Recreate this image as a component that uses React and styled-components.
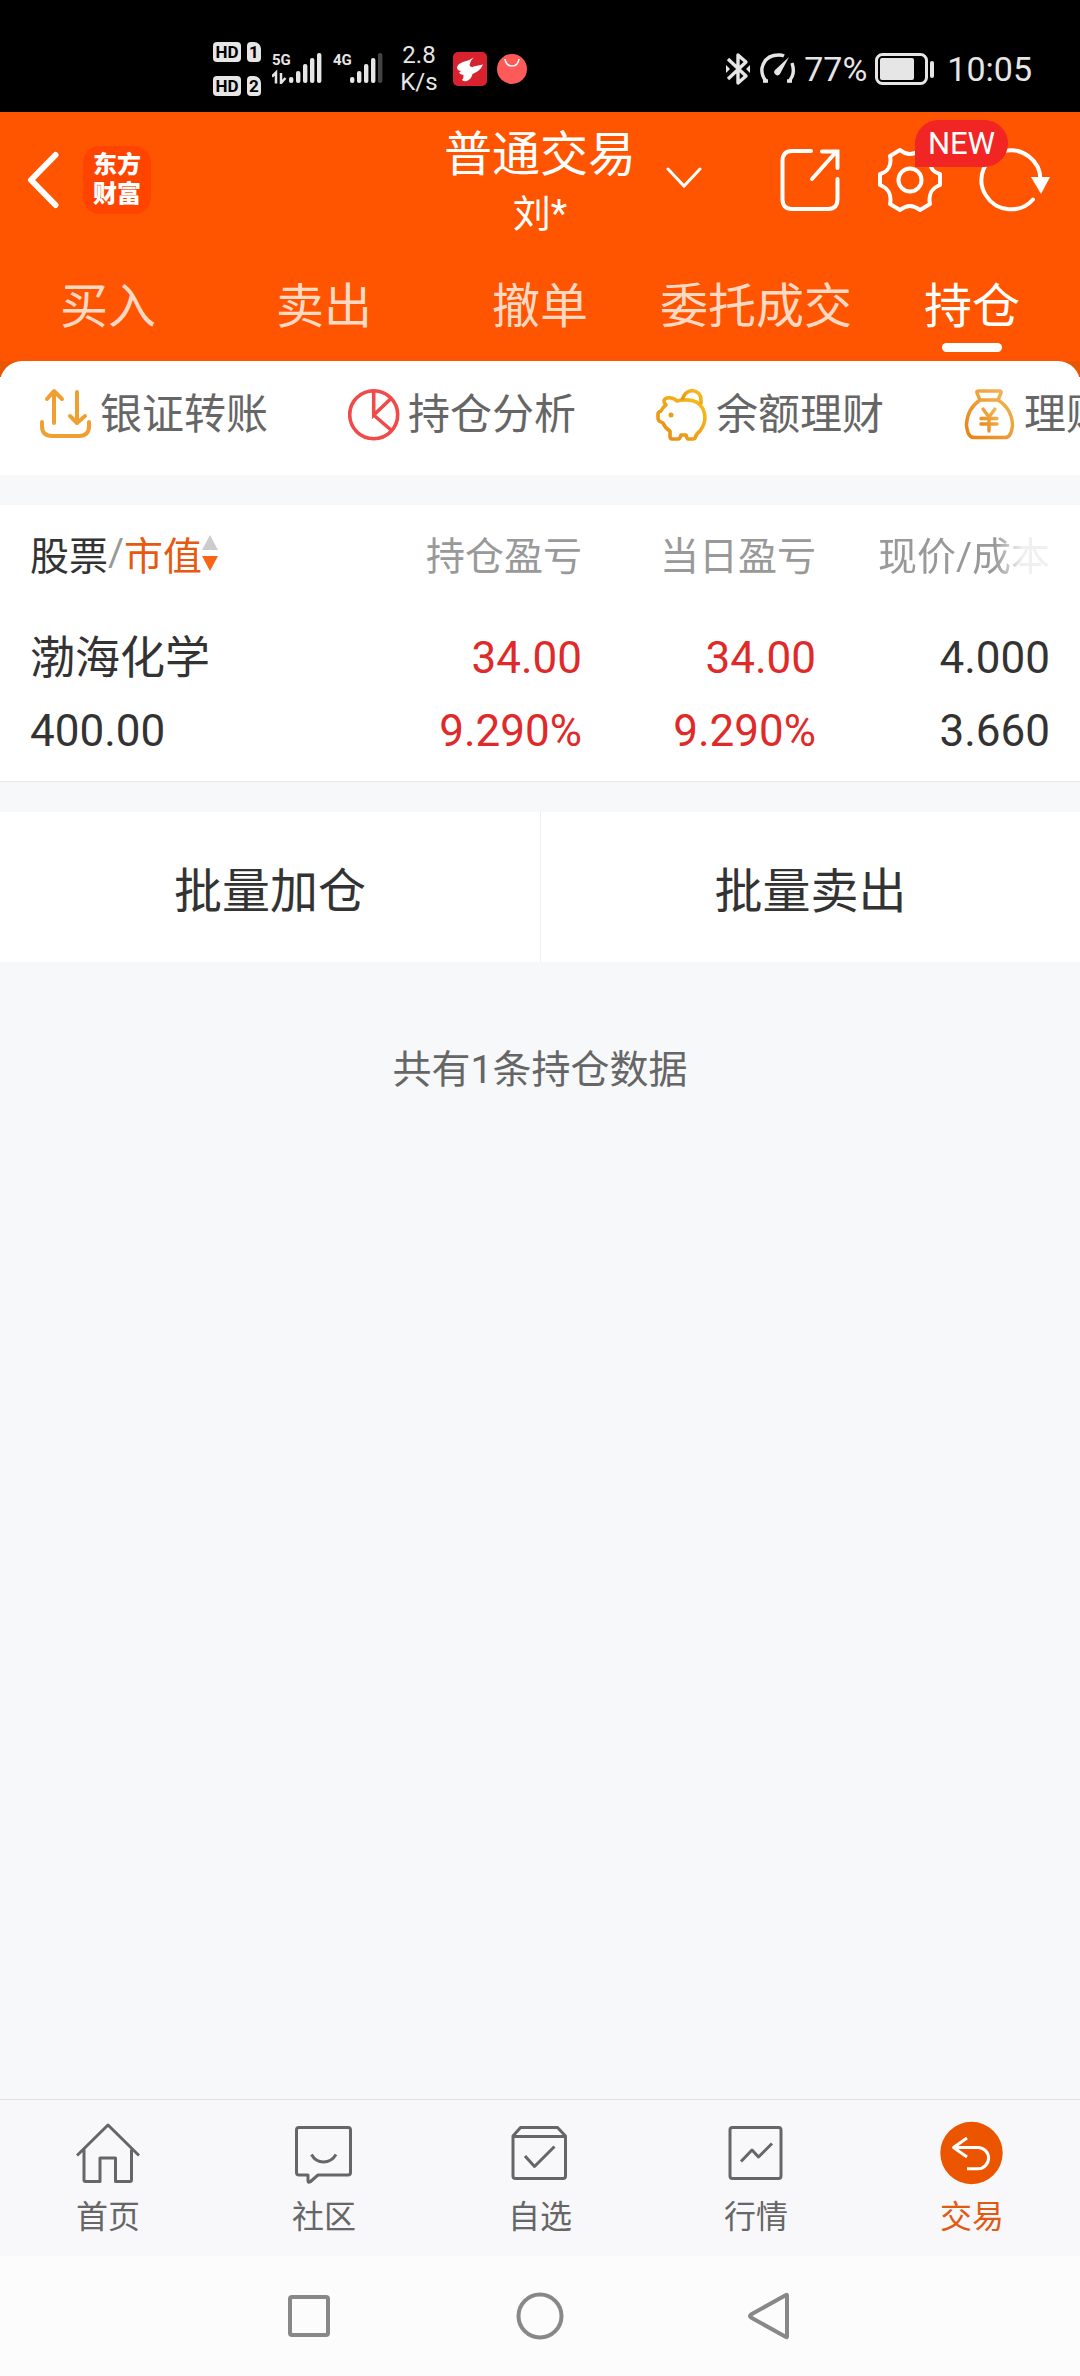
import React, {useState} from 'react';
import styled, {createGlobalStyle} from "styled-components";

const tradeTabs = ['买入', '卖出', '撤单', '委托成交', '持仓'];

const holdings = [
  {
    id: 1,
    name: '渤海化学',
    value: '400.00',
    profit: '34.00',
    profitRate: '9.290%',
    dayProfit: '34.00',
    dayRate: '9.290%',
    price: '4.000',
    cost: '3.660'
  }
];

const TransferIcon = () => (
  <svg width="52" height="56" viewBox="0 0 52 56" fill="none" stroke="#f0a030" strokeWidth="4" strokeLinecap="round" strokeLinejoin="round">
    <path d="M2 34v4q0 10 10 10h27q10 0 10-10v-4M14 35V4M7 11l7-8 8 8M37 4v31M30 28l7 7 8-7" />
  </svg>
);

const PieIcon = () => (
  <svg width="52" height="56" viewBox="0 0 52 56" fill="none" stroke="#f04a4a" strokeWidth="3.6">
    <circle cx="25.7" cy="26.7" r="24" />
    <path d="M25.7 3v24L43 10.5M25.7 27L43 42" />
  </svg>
);

const PiggyIcon = () => (
  <svg width="52" height="56" viewBox="0 0 52 56" fill="none" stroke="url(#piggy)" strokeWidth="3.6" strokeLinejoin="round">
    <defs>
      <linearGradient id="piggy" x1="1" y1="0" x2="0" y2="1">
        <stop offset="0" stopColor="#f7c01c" />
        <stop offset="1" stopColor="#e88a16" />
      </linearGradient>
    </defs>
    <path d="M8 13q0-2 3-3 6-1 10 3 3-1 7-1 14-1 19 9 5 11-3 22-4 3-5 7 0 1-2 1h-5q-1 0-2-4h-5q-1 4-3 4h-6q-2 0-2-3v-5q-5-3-7-8l-4-2q-1-1-1-3v-4q0-2 3-3 2-4 5-6-2-2-2-4z" />
    <path d="M26 12q3-9 10-9.5 9 1 9 9.5v4" />
    <circle cx="15" cy="27" r="2.5" fill="#ee9c18" stroke="none" />
  </svg>
);

const MoneyBagIcon = () => (
  <svg width="52" height="56" viewBox="0 0 52 56" fill="none" stroke="url(#bag)" strokeWidth="3.4" strokeLinecap="round" strokeLinejoin="round">
    <defs>
      <linearGradient id="bag" x1="1" y1="0" x2="0" y2="1">
        <stop offset="0" stopColor="#f3b85a" />
        <stop offset="1" stopColor="#ea8210" />
      </linearGradient>
    </defs>
    <path d="M16 12L13 5q-1-2 2-2h20q3 0 2 2l-3 7M16 12h18q14 9 14.5 25-1 12-7 12.5h-32q-6-.5-7-12.5Q3 21 16 12z" />
    <path d="M19 21l6 8 6-8M25 29v14M17 30.5h16M17 36h16" />
  </svg>
);

const quickLinks = [
  {label: '银证转账', Icon: TransferIcon},
  {label: '持仓分析', Icon: PieIcon},
  {label: '余额理财', Icon: PiggyIcon},
  {label: '理财产品', Icon: MoneyBagIcon}
];

const HomeIcon = () => (
  <path d="M1 34.5L32 4l31 30.5M8 28.5V59q0 1.5 1.5 1.5H24V37h15.5v23.5H54q1.5 0 1.5-1.5V28.5" />
);

const ChatIcon = () => (
  <>
    <path d="M7 6.5h49q2.5 0 2.5 2.5v42.5q0 2.5-2.5 2.5H26l-8 7q-2 1-2-1v-6H7q-2.5 0-2.5-2.5V9q0-2.5 2.5-2.5z" />
    <path d="M19.5 33.5q4 7.5 12 7.5t12.5-7.5" />
  </>
);

const PickIcon = () => (
  <>
    <path d="M12.5 6.5h37l8 8.5v40q0 2.5-2.5 2.5H7.5Q5 57.5 5 55V15zM5 15.5h52.5" />
    <path d="M17 35l9.5 10.5 20-20" />
  </>
);

const ChartIcon = () => (
  <>
    <rect x="6" y="6.5" width="51" height="51" rx="2.5" />
    <path d="M17 40.5l11-11.5 6.5 7L48 22.5" />
  </>
);

const TradeIcon = () => (
  <>
    <circle cx="31.5" cy="32" r="31.2" fill="#eb5500" stroke="none" />
    <path d="M27 17L13.5 26.5 27 36M13.5 26.5H38a10.6 10.6 0 010 21.2H27" stroke="#fff" />
  </>
);

const mainTabs = [
  {label: '首页', Icon: HomeIcon},
  {label: '社区', Icon: ChatIcon},
  {label: '自选', Icon: PickIcon},
  {label: '行情', Icon: ChartIcon},
  {label: '交易', Icon: TradeIcon}
];

const barTops = [24, 18, 11, 5, 0];

const Signal = ({type, weak, arrows}) => (
  <SignalWrapper>
    <span>{type}</span>
    <svg width="50" height="31" viewBox="0 0 50 31">
      {barTops.map((top, i) => (
        <rect key={top} x={17 + i * 7} y={top} width="4.4" height={30 - top} rx="2" fill={weak && i === 4 ? '#444' : '#e6e6e6'} />
      ))}
      {arrows && <path d="M0 23.5l4-4v11M9 20v10l4.5-5" fill="none" stroke="#e6e6e6" strokeWidth="2.5" />}
    </svg>
  </SignalWrapper>
);

const StatusBar = () => (
  <StatusWrapper>
    <StatusGroup>
      <SimList>
        <SimRow><b>HD</b><i>1</i></SimRow>
        <SimRow><b>HD</b><i>2</i></SimRow>
      </SimList>
      <Signal type="5G" arrows />
      <Signal type="4G" weak />
      <Speed>2.8<br />K/s</Speed>
      <svg width="74" height="34" viewBox="0 0 74 34">
        <rect width="34" height="34" rx="5" fill="#d8222f" />
        <path d="M4 16q0-4 6-6 6-1 10.500-4.500Q17 9 16.500 13q1 3 4 1.500L30 12.500q-3 7-10.500 9.500-1 5-5.500 7-3 1-5-1 2-2 1.500-5-5-1-4-3l2-1q-4 0-4.500-3z" fill="#fff" />
        <circle cx="59" cy="17" r="15" fill="#ff5a5a" />
        <path d="M52 7q1 7 7 7t7-7" fill="none" stroke="#fff" strokeWidth="1.6" />
      </svg>
    </StatusGroup>
    <StatusGroup>
      <svg width="70" height="34" viewBox="0 0 70 34" fill="none" stroke="#e6e6e6" strokeWidth="3.4">
        <path d="M2 7l18 17-8 7V3l8 7L2 27" strokeLinejoin="round" />
        <path d="M0 13l4 4-4 4zM24 13l-4 4 4 4z" fill="#e6e6e6" stroke="none" />
        <path d="M41 30q-6-6-5-14 3-13 17-13 3 0 5 1M66 11q4 12-4 19M37 29h5M61 29h5" />
        <path d="M63 5L54 22a3 3 0 11-5-4z" fill="#e6e6e6" stroke="none" />
      </svg>
      <span>77%</span>
      <svg width="60" height="34" viewBox="0 0 60 34">
        <rect x="1.5" y="2.5" width="50" height="29" rx="6" fill="none" stroke="#e6e6e6" strokeWidth="3" />
        <rect x="5" y="6" width="34" height="22" rx="2" fill="#e6e6e6" />
        <rect x="55" y="9" width="4" height="17" rx="2" fill="#e6e6e6" />
      </svg>
      <Clock>10:05</Clock>
    </StatusGroup>
  </StatusWrapper>
);

const Header = ({activeTab, onChange}) => (
  <HeaderWrapper>
    <Toolbar>
      <ToolbarLeft>
        <PlainButton type="button" aria-label="返回">
          <svg width="36" height="64" viewBox="0 0 36 64" fill="none" stroke="#fff" strokeWidth="6" strokeLinecap="round" strokeLinejoin="round">
            <path d="M28.5 7L4 32l24.5 25" />
          </svg>
        </PlainButton>
        <Logo>东方<br />财富</Logo>
      </ToolbarLeft>
      <Account>
        <h1>普通交易</h1>
        <p>刘*</p>
      </Account>
      <ToolbarRight>
        <PlainButton type="button" aria-label="切换账户">
          <svg width="36" height="28" viewBox="0 0 36 28" fill="none" stroke="#fff" strokeWidth="3" strokeLinecap="round">
            <path d="M2 3l16 17L34 3" />
          </svg>
        </PlainButton>
        <Tools>
          <PlainButton type="button" aria-label="分享">
            <svg width="64" height="64" viewBox="0 0 64 64" fill="none" stroke="#fff" strokeWidth="4" strokeLinecap="round">
              <path d="M34 3H15Q5.5 3 5.5 13v38Q5.5 61 15 61h36q9.500 0 9.500-10V31M35 31L59 4M45 3.5h15.500V20" />
            </svg>
          </PlainButton>
          <PlainButton type="button" aria-label="设置">
            <svg width="64" height="64" viewBox="0 0 64 64" fill="none" stroke="#fff" strokeWidth="4" strokeLinejoin="round">
              <path d="M22 2Q32 10 42 2l10 6c-2 9 2 16 10 18v11c-8 3-12 10-10 19l-10 6Q32 54 22 62l-10-6c2-9-2-16-10-19V26C10 24 14 17 12 8z" />
              <circle cx="32" cy="32" r="11.5" />
            </svg>
            <Badge>NEW</Badge>
          </PlainButton>
          <PlainButton type="button" aria-label="刷新">
            <svg width="72" height="64" viewBox="0 0 72 64" fill="none" stroke="#fff" strokeWidth="4" strokeLinecap="round">
              <path d="M61.500 32A29.500 29.500 0 1054 51.500" />
              <path d="M52 29h19l-9 17z" fill="#fff" stroke="none" />
            </svg>
          </PlainButton>
        </Tools>
      </ToolbarRight>
    </Toolbar>
    <TabList>
      {tradeTabs.map((tab) => (
        <TradeTab type="button" key={tab} $active={tab === activeTab} onClick={() => onChange(tab)}>{tab}</TradeTab>
      ))}
    </TabList>
  </HeaderWrapper>
);

const HoldingTable = () => (
  <Table>
    <colgroup>
      <col />
      <col className="num" />
      <col className="num" />
      <col className="last" />
    </colgroup>
    <thead>
      <tr>
        <th>
          <SortHead>
            <b>股票</b>/<em>市值</em>
            <svg width="16" height="36" viewBox="0 0 16 36">
              <path d="M8 0l8 15H0z" fill="#ccc" />
              <path d="M0 21h16L8 36z" fill="#f96514" />
            </svg>
          </SortHead>
        </th>
        <th>持仓盈亏</th>
        <th>当日盈亏</th>
        <th><Fade>现价/成本</Fade></th>
      </tr>
    </thead>
    <tbody>
      {holdings.map((item) => (
        <tr key={item.id}>
          <td><StockName>{item.name}</StockName>{item.value}</td>
          <Rise>{item.profit}<br />{item.profitRate}</Rise>
          <Rise>{item.dayProfit}<br />{item.dayRate}</Rise>
          <td>{item.price}<br />{item.cost}</td>
        </tr>
      ))}
    </tbody>
  </Table>
);

const App = () => {
  const [activeTab, setActiveTab] = useState('持仓');

  return (
    <Page>
      <GlobalStyle />
      <StatusBar />
      <Header activeTab={activeTab} onChange={setActiveTab} />
      <Main>
        <QuickWrapper>
          <QuickList>
            {quickLinks.map(({label, Icon}) => (
              <a href="#" key={label}><Icon /><span>{label}</span></a>
            ))}
          </QuickList>
        </QuickWrapper>
        <HoldingTable />
        <BatchRow>
          <button type="button">批量加仓</button>
          <button type="button">批量卖出</button>
        </BatchRow>
        <Summary>共有{holdings.length}条持仓数据</Summary>
      </Main>
      <MainNav>
        {mainTabs.map(({label, Icon}) => (
          <NavLink href="#" key={label} $active={label === '交易'}>
            <svg width="64" height="64" viewBox="0 0 64 64" fill="none" stroke="#666" strokeWidth="3" strokeLinejoin="round">
              <Icon />
            </svg>
            {label}
          </NavLink>
        ))}
      </MainNav>
      <SystemNav>
        <PlainButton type="button" aria-label="最近任务">
          <svg width="48" height="48" viewBox="0 0 48 48" fill="none" stroke="#888" strokeWidth="4">
            <rect x="4" y="5" width="38" height="38" rx="2" />
          </svg>
        </PlainButton>
        <PlainButton type="button" aria-label="主屏幕">
          <svg width="48" height="48" viewBox="0 0 48 48" fill="none" stroke="#888" strokeWidth="4">
            <circle cx="24" cy="24" r="21.5" />
          </svg>
        </PlainButton>
        <PlainButton type="button" aria-label="后退">
          <svg width="48" height="48" viewBox="0 0 48 48" fill="none" stroke="#888" strokeWidth="4" strokeLinejoin="round">
            <path d="M41 3.5v41q0 1-1 .5L5 25.5q-2-1.500 0-3L40 3q1-.5 1 .5z" />
          </svg>
        </PlainButton>
      </SystemNav>
    </Page>
  )
}

const GlobalStyle = createGlobalStyle`
  *{
    box-sizing: border-box;
  }

  body{
    margin: 0;
    background-color: #f7f8fa;
    font-family: Roboto, "Noto Sans CJK SC", sans-serif;
    color: #333;
  }

  button{
    font-family: inherit;
    border: 0;
    padding: 0;
    background: none;
    color: inherit;
    cursor: pointer;
  }

  a{
    color: inherit;
    text-decoration: none;
  }

  svg{
    display: block;
    flex: none;
  }
`;

const Page = styled.div`
  min-height: 100vh;
  display: flex;
  flex-direction: column;
`;

const StatusWrapper = styled.div`
  height: 112px;
  padding: 25px 48px 0 213px;
  display: flex;
  justify-content: space-between;
  align-items: center;
  background-color: #000;
  color: #e6e6e6;
  font-size: 34px;
`;

const StatusGroup = styled.div`
  display: flex;
  align-items: center;
  gap: 8px;
`;

const SimList = styled.div`
  display: grid;
  gap: 14px;
`;

const SimRow = styled.div`
  display: flex;
  gap: 6px;
  font-size: 17px;
  line-height: 20px;
  color: #000;

  b, i{
    background-color: #e6e6e6;
    border-radius: 4px;
    text-align: center;
    font-style: normal;
    font-weight: 700;
  }

  b{
    width: 28px;
  }

  i{
    width: 14px;
    border-top-right-radius: 7px;
  }
`;

const SignalWrapper = styled.div`
  position: relative;
  margin-left: 3px;

  span{
    position: absolute;
    left: 0;
    top: 0;
    font-size: 15px;
    line-height: 14px;
    font-weight: 700;
  }
`;

const Speed = styled.div`
  width: 52px;
  margin-left: 2px;
  font-size: 24px;
  line-height: 27px;
  text-align: center;
`;

const Clock = styled.time`
  margin-left: 4px;
`;

const PlainButton = styled.button`
  position: relative;
`;

const HeaderWrapper = styled.header`
  background-color: #ff5500;
  color: #fff;
`;

const Toolbar = styled.div`
  height: 136px;
  display: grid;
  grid-template-columns: 1fr auto 1fr;
  align-items: center;
`;

const ToolbarLeft = styled.div`
  display: flex;
  align-items: center;
  gap: 20px;
  padding-left: 27px;
`;

const Logo = styled.div`
  width: 68px;
  height: 68px;
  padding: 5px 0;
  border-radius: 16px;
  background-color: #ff4400;
  font-size: 24px;
  line-height: 29px;
  font-weight: 900;
  text-align: center;
`;

const Account = styled.div`
  padding-top: 8px;
  text-align: center;

  h1{
    margin: 0;
    font-size: 48px;
    line-height: 60px;
    font-weight: 400;
  }

  p{
    margin: 0;
    font-size: 38px;
    line-height: 58px;
  }
`;

const ToolbarRight = styled.div`
  display: flex;
  align-items: center;
  justify-content: space-between;
  padding: 0 29px 0 30px;
`;

const Tools = styled.div`
  display: flex;
  gap: 37px;
`;

const Badge = styled.span`
  position: absolute;
  z-index: 1;
  left: 37px;
  top: -28px;
  width: 93px;
  border-radius: 24px 24px 24px 0;
  background-color: #f22525;
  color: #fff;
  font-size: 31px;
  line-height: 47px;
`;

const TabList = styled.nav`
  display: grid;
  grid-template-columns: repeat(5, 1fr);
`;

const TradeTab = styled.button`
  && {
    height: 113px;
    padding-bottom: 9px;
    color: ${({$active}) => $active ? '#fff' : '#ffd9c4'};
  }

  display: flex;
  flex-direction: column;
  align-items: center;
  justify-content: flex-end;
  gap: 7px;
  font-size: 48px;
  line-height: 58px;

  &::after{
    content: "";
    width: 60px;
    height: 9px;
    border-radius: 5px;
    background-color: ${({$active}) => $active ? '#fff' : 'transparent'};
  }
`;

const Main = styled.main`
  flex: 1;
`;

const QuickWrapper = styled.div`
  background: linear-gradient(#e85600 16px, #fff 16px);
`;

const QuickList = styled.nav`
  height: 114px;
  padding: 0 0 4px 40px;
  display: flex;
  align-items: center;
  overflow: hidden;
  border-radius: 22px 22px 0 0;
  background-color: #fff;

  a{
    flex: 0 0 308px;
    display: flex;
    align-items: center;
    gap: 8px;
    font-size: 42px;
    line-height: 56px;
    color: #666;
    white-space: nowrap;
  }

  span{
    padding-bottom: 3px;
  }
`;

const Table = styled.table`
  width: 100%;
  margin-top: 30px;
  table-layout: fixed;
  border-collapse: collapse;
  border-bottom: 1px solid #e6e8eb;
  background-color: #fff;
  text-align: right;

  .num{
    width: 234px;
  }

  .last{
    width: 264px;
  }

  th{
    height: 98px;
    padding: 0 0 3px;
    font-size: 39px;
    font-weight: 400;
    text-align: right;
    color: #999;
    white-space: nowrap;
  }

  td{
    padding: 19px 0 13px;
    font-size: 44px;
    line-height: 73px;
  }

  th:first-child, td:first-child{
    padding-left: 30px;
    text-align: left;
  }

  th:last-child, td:last-child{
    padding-right: 30px;
  }
`;

const SortHead = styled.div`
  display: flex;
  align-items: center;

  b{
    font-weight: 400;
    color: #333;
  }

  em{
    font-style: normal;
    color: #e55a10;
  }
`;

const Fade = styled.span`
  mask-image: linear-gradient(to right, #000 68%, rgba(0, 0, 0, 0.15) 84%);
`;

const StockName = styled.div`
  font-size: 45px;
`;

const Rise = styled.td`
  color: #e02a2a;
`;

const BatchRow = styled.div`
  margin-top: 30px;
  display: grid;
  grid-template-columns: 1fr 1fr;
  background-color: #fff;

  button{
    height: 150px;
    font-size: 48px;
  }

  button + button{
    border-left: 1px solid #eee;
  }
`;

const Summary = styled.p`
  margin: 79px 0;
  font-size: 39px;
  line-height: 58px;
  text-align: center;
  color: #666;
`;

const MainNav = styled.nav`
  display: grid;
  grid-template-columns: repeat(5, 1fr);
  border-top: 1px solid #dfe1e4;
  background-color: #f8f8fa;
`;

const NavLink = styled.a`
  padding: 21px 0 16px;
  display: flex;
  flex-direction: column;
  align-items: center;
  gap: 9px;
  font-size: 32px;
  line-height: 46px;
  color: ${({$active}) => $active ? '#e05a14' : '#666'};
`;

const SystemNav = styled.nav`
  height: 120px;
  display: flex;
  align-items: center;
  justify-content: center;
  gap: 182px;
  background-color: #fcfcfc;
`;

export default App
